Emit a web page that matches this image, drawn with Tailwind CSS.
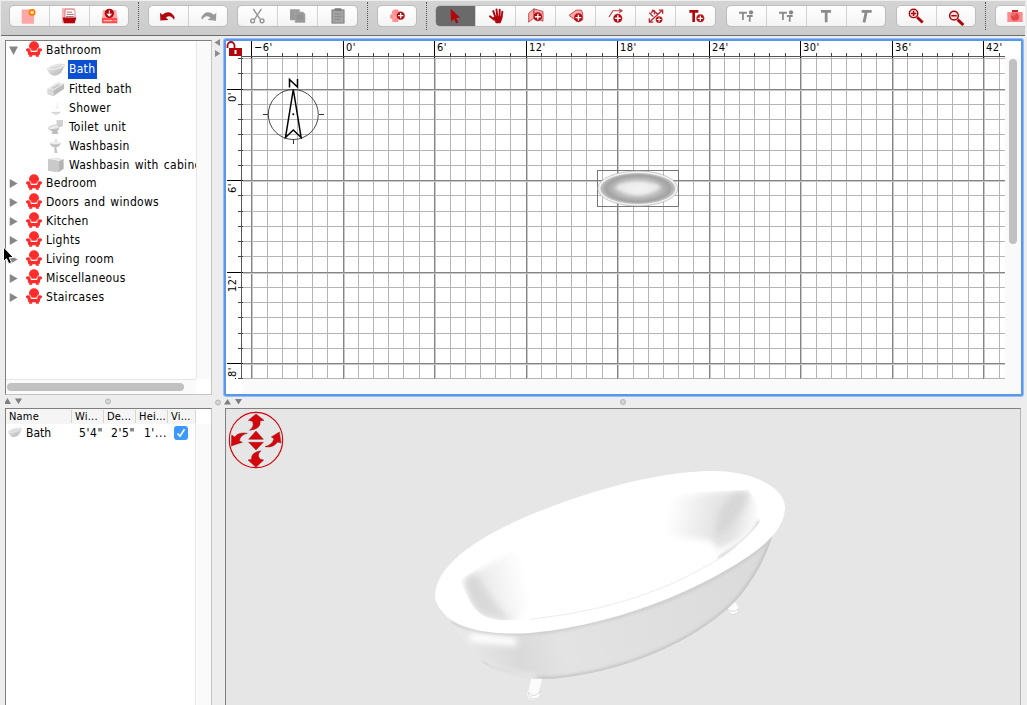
<!DOCTYPE html>
<html lang="en">
<head>
<meta charset="utf-8">
<title>Home planner</title>
<script src="https://cdn.jsdelivr.net/npm/@tailwindcss/browser@4"></script>
</head>
<body class="w-[1027px] h-[705px] overflow-hidden bg-[#ededed] font-['DejaVu_Sans_Condensed','DejaVu_Sans',sans-serif] text-black flex flex-col relative">

<svg width="0" height="0" class="absolute">
  <defs>
    <linearGradient id="tub" x1="0" y1="0" x2="1" y2="1"><stop offset="0" stop-color="#f0f0f0"/><stop offset="1" stop-color="#b2b2b2"/></linearGradient>
    <symbol id="chair" viewBox="78 14 48 48">
      <path fill="#ff2c2c" d="M87 30a15 15 0 0 1 30 0v6q-5 2-6 8H93q-1-6-6-8zM78 39a7 7 0 0 1 12 0l3 8h18l3-8a7 7 0 0 1 12 0q1 5-5 7l-2 10h-3l1 5h-9l-1-4H97l-1 4h-9l1-5h-3l-2-10q-6-2-5-7z"/>
      <path fill="none" stroke="#fff" stroke-width="2" d="M86 33q7 2 8 11h16q1-9 8-11"/>
    </symbol>
    <symbol id="bath" viewBox="0 0 54 42">
      <path d="M1 18q3 14 14 19 14 4 25-6 9-9 13-27z" fill="url(#tub)"/>
      <ellipse cx="27" cy="13" rx="26" ry="7.500" transform="rotate(-14 27 13)" fill="#f4f4f4" stroke="#c4c4c4" stroke-width="1.500"/>
      <ellipse cx="27" cy="13" rx="20" ry="4" transform="rotate(-14 27 13)" fill="#dadada"/>
      <path d="M17 37l-2 3M43 28l3 3" stroke="#ccc" stroke-width="2"/>
    </symbol>
    <g id="plus"><circle r="14" fill="#b4050b" stroke="#ffd7d7" stroke-width="1"/><path d="M-9 0H9M0-9V9" stroke="#fff" stroke-width="4.500"/></g>
  </defs>
</svg>

<!-- Toolbar -->
<header class="h-[36px] shrink-0 mx-px w-[1024px] border-t border-[#eee] border-b border-b-[#6d6d6d] bg-linear-to-b from-[#d4d4d4] to-[#cbcbcb] pt-1 pl-2 flex items-start overflow-hidden">
  <div class="w-[120px] h-[22px] flex shrink-0 rounded-[5px] overflow-hidden border border-[#bdbdbd] bg-linear-to-b from-white to-[#f4f4f4] divide-x divide-[#d2d2d2]">
    <svg class="w-10 h-full shrink-0" viewBox="29 18 120 60"><path d="M65 28h38v44H65z" fill="#ffa7a7"/><circle cx="97" cy="37" r="8" fill="#ffe28a" stroke="#ff7a05" stroke-width="5"/></svg>
    <svg class="w-10 h-full shrink-0" viewBox="149 18 120 60"><path d="M186 24h40v46h-40z" fill="#ffb0b0"/><path d="M196 27h24l6 7v26h-32z" fill="#fff" stroke="#b55" stroke-width="2"/><path d="M200 36h17M200 43h22M198 50h24" stroke="#a66" stroke-width="3"/><path d="M188 53h42l-5 17h-33z" fill="#b1060c"/></svg>
    <svg class="w-10 h-full shrink-0" viewBox="269 18 120 60"><path d="M308 30h40l3 23h-46z" fill="#ffabab"/><path d="M305 53h46v17h-46z" fill="#ff4d4d"/><path d="M310 62h26M340 62h3M346 62h3" stroke="#ffb5b5" stroke-width="4"/><circle cx="327" cy="40" r="14" fill="#b1060c"/><path d="M327 31v12M320 41l7 8 7-8" fill="#fff" stroke="#fff" stroke-width="3"/></svg>
  </div>
  <div class="h-7 w-px ml-[9px] mr-[9px] -mt-[3px] border-l border-dotted border-[#555] shrink-0"></div>
  <div class="w-[80px] h-[22px] flex shrink-0 rounded-[5px] overflow-hidden border border-[#bdbdbd] bg-linear-to-b from-white to-[#f4f4f4] divide-x divide-[#d2d2d2]">
    <svg class="w-10 h-full shrink-0" viewBox="446 18 120 60"><path fill="#b1060c" d="M480 38l7 6q24-18 38 8l-2 8q-10-18-25-7l8 7-25 2z"/></svg>
    <svg class="w-10 h-full shrink-0" viewBox="566 18 120 60"><path fill="#999" d="M648 38l-7 6q-24-18-38 8l2 8q10-18 25-7l-8 7 25 2z"/></svg>
  </div>
  <div class="w-[121px] h-[22px] ml-[9px] flex shrink-0 rounded-[5px] overflow-hidden border border-[#bdbdbd] bg-linear-to-b from-white to-[#f4f4f4] divide-x divide-[#d2d2d2]">
    <svg class="w-10 h-full shrink-0" viewBox="24 18 120 60"><g fill="none" stroke="#8f8f8f" stroke-width="4"><path d="M71 26l21 32M96 26L75 58"/><circle cx="69" cy="63" r="6"/><circle cx="98" cy="63" r="6"/></g></svg>
    <svg class="w-10 h-full shrink-0" viewBox="144 18 120 60"><rect x="181" y="27" width="30" height="34" rx="2" fill="#9b9b9b"/><path d="M197 36h24l6 6v26h-30z" fill="#999" stroke="#aaa" stroke-width="2"/><path d="M202 48h18M202 55h18" stroke="#868686" stroke-width="2"/></svg>
    <svg class="w-10 h-full shrink-0" viewBox="264 18 120 60"><rect x="304" y="28" width="40" height="43" rx="2" fill="#929292"/><path d="M314 25h20v7h-20z" fill="#7c7c7c"/><path d="M309 34h30v33h-30z" fill="#a5a5a5"/><path d="M313 42h20M313 50h22M313 58h18" stroke="#858585" stroke-width="2.500"/></svg>
  </div>
  <div class="h-7 w-px ml-[9px] mr-[9px] -mt-[3px] border-l border-dotted border-[#555] shrink-0"></div>
  <div class="w-[40px] h-[22px] flex shrink-0 rounded-[5px] overflow-hidden border border-[#bdbdbd] bg-linear-to-b from-white to-[#f4f4f4]">
    <svg class="w-10 h-full shrink-0" viewBox="444 18 120 60"><path fill="#ff9292" d="M486 42a11 11 0 0 1 22-5v20h-3v9h-18v-9q-9-2-7-10 2-6 6-5z"/><path d="M487 43q6 3 4 9h12" fill="none" stroke="#ffc4c4" stroke-width="2"/><use href="#plus" transform="translate(512 47) scale(.9)"/></svg>
  </div>
  <div class="h-7 w-px ml-[9px] mr-[8px] -mt-[3px] border-l border-dotted border-[#555] shrink-0"></div>
  <div class="w-[281px] h-[22px] flex shrink-0 rounded-[5px] overflow-hidden border border-[#bdbdbd] bg-linear-to-b from-white to-[#f4f4f4] divide-x divide-[#d2d2d2]">
    <svg class="w-10 h-full shrink-0 bg-[#6a6a6a]" viewBox="18 18 120 60"><path fill="#b1060c" d="M63 26l29 27-12 1 7 13-7 4-7-14-9 9z"/></svg>
    <svg class="w-10 h-full shrink-0" viewBox="137 18 120 60"><path fill="none" stroke="#b1060c" stroke-width="6" stroke-linecap="round" d="M180 49l12 10M190 33l8 22M200 28l3 26M210 29l-1 26M218 35l-3 20"/><path fill="#b1060c" d="M189 51l29-3q0 12-6 22h-14z"/></svg>
    <svg class="w-10 h-full shrink-0" viewBox="257 18 120 60"><path d="M296 40l16-14v28l-16 13zM312 26l28 8v30l-28-10z" fill="#ffabab" stroke="#c14c4c" stroke-width="3"/><use href="#plus" transform="translate(324 50)"/></svg>
    <svg class="w-10 h-full shrink-0" viewBox="377 18 120 60"><path d="M417 46l22-16h16l4 10v20l-18 4z" fill="#ffa6a6" stroke="#c14c4c" stroke-width="3"/><use href="#plus" transform="translate(446 53)"/></svg>
    <svg class="w-10 h-full shrink-0" viewBox="497 18 120 60"><path d="M537 51l12-19h26M568 26l9 6-9 6" fill="none" stroke="#c4383c" stroke-width="3.500"/><use href="#plus" transform="translate(564 55)"/></svg>
    <svg class="w-10 h-full shrink-0" viewBox="617 18 120 60"><path d="M658 67l40-37M658 55v12h12M687 30h12v11M666 30l20 13M664 39q8-14 11-5l-2 9M658 38l12 12" fill="none" stroke="#b9292e" stroke-width="4"/><use href="#plus" transform="translate(688 59) scale(.75)"/></svg>
    <svg class="w-10 h-full shrink-0" viewBox="737 18 120 60"><path d="M777 34h27M790 34v32" stroke="#b1060c" stroke-width="8"/><use href="#plus" transform="translate(810 55) scale(.85)"/></svg>
  </div>
  <div class="w-[160px] h-[22px] ml-[10px] flex shrink-0 rounded-[5px] overflow-hidden border border-[#bdbdbd] bg-linear-to-b from-white to-[#f4f4f4] divide-x divide-[#d2d2d2]">
    <svg class="w-10 h-full shrink-0" viewBox="19 18 120 60"><path d="M56 38h24M68 38v22M80 48h18M89 48v18" stroke="#8c8c8c" stroke-width="5.500"/><circle cx="93" cy="37" r="6.500" fill="#888"/></svg>
    <svg class="w-10 h-full shrink-0" viewBox="139 18 120 60"><path d="M176 38h24M188 38v22M200 48h18M209 48v18" stroke="#8c8c8c" stroke-width="5.500"/><circle cx="213" cy="37" r="6.500" fill="#888"/></svg>
    <svg class="w-10 h-full shrink-0" viewBox="259 18 120 60"><path d="M302 34h31M318 34v33" stroke="#8c8c8c" stroke-width="8.500"/></svg>
    <svg class="w-10 h-full shrink-0" viewBox="380 18 120 60"><path d="M424 34h30M438 34l-7 33" stroke="#8c8c8c" stroke-width="8.500"/></svg>
  </div>
  <div class="w-[80px] h-[22px] ml-[10px] flex shrink-0 rounded-[5px] overflow-hidden border border-[#bdbdbd] bg-linear-to-b from-white to-[#f4f4f4] divide-x divide-[#d2d2d2]">
    <svg class="w-10 h-full shrink-0" viewBox="529 18 120 60"><path d="M591 52l17 16" stroke="#a9060b" stroke-width="9"/><circle cx="580" cy="40" r="13" fill="#ffdede" stroke="#a9060b" stroke-width="4.500"/><path d="M572 40h16M580 32v16" stroke="#a9060b" stroke-width="4.500"/></svg>
    <svg class="w-10 h-full shrink-0" viewBox="649 18 120 60"><path d="M711 59l17 16" stroke="#a9060b" stroke-width="9"/><circle cx="700" cy="47" r="13" fill="#ffdede" stroke="#a9060b" stroke-width="4.500"/><path d="M692 47h16" stroke="#a9060b" stroke-width="4.500"/></svg>
  </div>
  <div class="h-7 w-px ml-[9px] mr-[9px] -mt-[3px] border-l border-dotted border-[#555] shrink-0"></div>
  <div class="w-[41px] h-[22px] flex shrink-0 rounded-[5px] overflow-hidden border border-[#bdbdbd] bg-linear-to-b from-white to-[#f4f4f4]">
    <svg class="w-10 h-full shrink-0" viewBox="828 18 120 60"><path d="M862 36h46v30h-46z" fill="#ff8a8a"/><path d="M876 30h18v6h-18z" fill="#b9292e"/><circle cx="885" cy="50" r="12" fill="#e5484c"/><path d="M877 48q3-7 10-6" stroke="#ff9a9a" stroke-width="3" fill="none"/></svg>
  </div>
</header>

<main class="flex flex-1 min-h-0">
  <!-- Catalog and furniture list -->
  <section class="w-[207px] ml-[5px] pt-1 flex flex-col shrink-0">
    <div class="h-[355px] shrink-0 bg-white border-t border-l border-[#7f7f7f] border-r border-r-[#c4c4c4] border-b border-b-[#c4c4c4] grid grid-cols-[190px_15px] grid-rows-[338px_15px]">
      <div id="tree" class="overflow-hidden text-[12px] tracking-[0.3px] [word-spacing:1.3px] whitespace-nowrap"></div>
      <div class="bg-[#fafafa] border-l border-[#e6e6e6]"></div>
      <div class="bg-[#fafafa] border-t border-[#e6e6e6] pt-[3px] pl-px"><div class="w-[177px] h-2 rounded-full bg-[#c1c1c1]"></div></div>
      <div class="bg-white"></div>
    </div>
    <div class="h-[13px] shrink-0 flex items-center">
      <svg width="207" height="13" viewBox="0 0 207 13"><path d="M-1 9h7L2.500 3zM10 3.500h7L13.500 9z" fill="#7f7f7f"/><circle cx="103" cy="6.500" r="2.500" fill="#d5d5d5" stroke="#b5b5b5"/></svg>
    </div>
    <div class="flex-1 bg-white border-t border-l border-[#7f7f7f] border-r border-r-[#c4c4c4] flex flex-col text-[12px] leading-none whitespace-nowrap">
      <div class="h-[15px] w-[190px] bg-[#f5f5f5] grid grid-cols-[66px_32px_32px_32px_28px] items-center text-[11px] tracking-[0.2px]">
        <span class="pl-[3px] border-r border-[#d5d5d5] h-[13px] leading-[13px]">Name</span>
        <span class="pl-[3px] border-r border-[#d5d5d5] h-[13px] leading-[13px]">Wi...</span>
        <span class="pl-[3px] border-r border-[#d5d5d5] h-[13px] leading-[13px]">De...</span>
        <span class="pl-[3px] border-r border-[#d5d5d5] h-[13px] leading-[13px]">Hei...</span>
        <span class="pl-[3px] border-r border-[#d5d5d5] h-[13px] leading-[13px]">Vi...</span>
      </div>
      <div class="flex flex-1">
        <div class="w-[190px] border-r border-[#e6e6e6]">
          <div class="h-[17px] grid grid-cols-[66px_31px_32px_32px_28px] items-center">
            <span class="flex items-center pl-[2px] gap-1"><svg width="14" height="11" viewBox="0 0 54 42"><use href="#bath"/></svg>Bath</span>
            <span class="text-right tracking-[0.6px]">5'4"</span><span class="text-right tracking-[0.6px]">2'5"</span><span class="text-right tracking-[0.6px]">1'...</span>
            <span class="flex pl-[7px]"><svg width="14" height="14" viewBox="0 0 14 14"><rect width="14" height="14" rx="3" fill="#3b99fc"/><path d="M3.500 7.500L6 10.300l4.500-7" fill="none" stroke="#fff" stroke-width="1.600"/></svg></span>
          </div>
        </div>
        <div class="flex-1 bg-[#fafafa]"></div>
      </div>
    </div>
  </section>

  <!-- Vertical splitter -->
  <div class="w-3 shrink-0"><svg width="12" height="380" viewBox="212 36 12 380"><path d="M220 39v7l-5.500-3.500zM215 50v7l5.500-3.500z" fill="#8c8c8c"/><circle cx="218" cy="402.500" r="2.500" fill="#d5d5d5" stroke="#b5b5b5"/></svg></div>

  <!-- Plan and 3D view -->
  <section class="w-[799px] pt-[3px] flex flex-col shrink-0">
    <div class="h-[357px] shrink-0 border-2 border-[#5a96ea] rounded-[2px] shadow-[0_0_0_1px_#93bff8] bg-white">
      <svg id="plan" width="795" height="353" viewBox="226 41 795 353" font-family="DejaVu Sans Condensed" font-size="11" letter-spacing=".5">
        <defs>
          <radialGradient id="top"><stop offset="0" stop-color="#f0f0f0"/><stop offset=".3" stop-color="#e2e2e2"/><stop offset=".68" stop-color="#b4b4b4"/><stop offset=".85" stop-color="#a2a2a2"/><stop offset="1" stop-color="#c4c4c4"/></radialGradient>
          <filter id="blur1" x="-20%" y="-30%" width="140%" height="160%"><feGaussianBlur stdDeviation="1.800"/></filter>
        </defs>
        <path d="M1005 58h16v336H243v-15h762z" fill="#fafafa"/>
        <g id="grid" shape-rendering="crispEdges"></g>
        <g id="labels"></g>
        <!-- Padlock -->
        <path d="M227.500 48v-2.500a3.500 3.500 0 0 1 7 0V49" fill="none" stroke="#b1060c" stroke-width="1.800"/><path d="M229 48h13v8h-13z" fill="#b1060c"/><path d="M235.500 50v4" stroke="#fff" stroke-width="2"/>
        <!-- Compass -->
        <g fill="none" stroke="#333" stroke-width="1"><circle cx="293.300" cy="114.500" r="25" stroke-width=".9"/><path d="M263 114.500h5M319 114.500h5M293.500 139v5"/></g>
        <path d="M293.300 89.500l-7.800 48 7.800-7.500 7.800 7.500zM289.500 87.500v-8l8 7.500v-8" fill="none" stroke="#000" stroke-width="1.500"/><circle cx="293.300" cy="114.300" r="1"/>
        <!-- Selected bath -->
        <rect x="597.500" y="170.500" width="81" height="36" fill="none" stroke="#777"/>
        <ellipse cx="637.800" cy="188.500" rx="40" ry="17.500" fill="#f2f2f2" stroke="#b4b4b4" stroke-width=".7"/>
        <ellipse cx="637.800" cy="188.500" rx="37.500" ry="15.500" fill="url(#top)"/>
        <path d="M619 184q18-4 38 0l4 4q-8 5-23 7-15-2-23-7z" fill="#f2f2f2" opacity=".75" filter="url(#blur1)"/>
        <rect x="1009" y="59" width="8" height="185" rx="4" fill="#c1c1c1"/>
      </svg>
    </div>
    <div class="h-3 shrink-0"><svg width="799" height="12" viewBox="224 396 799 12"><path d="M224 404.500h7l-3.500-5.500zM235 399h7l-3.500 5.500z" fill="#7f7f7f"/><circle cx="623" cy="402" r="2.500" fill="#d5d5d5" stroke="#b5b5b5"/></svg></div>
    <div class="ml-px w-[796px] flex-1 bg-[#e6e6e6] border-l border-t border-[#808080] border-r border-r-[#b5b5b5]">
      <svg width="794" height="296" viewBox="226 409 794 296">
        <defs>
          <linearGradient id="side" gradientUnits="userSpaceOnUse" x1="100" y1="600" x2="1050" y2="350"><stop offset="0" stop-color="#ececec"/><stop offset=".19" stop-color="#d9d9d9"/><stop offset=".32" stop-color="#e3e3e3"/><stop offset="1" stop-color="#dadada"/></linearGradient>
          <linearGradient id="inL" gradientUnits="userSpaceOnUse" x1="160" y1="430" x2="320" y2="390"><stop offset="0" stop-color="#e4e4e4"/><stop offset=".4" stop-color="#f0f0f0"/><stop offset="1" stop-color="#fff"/></linearGradient>
          <linearGradient id="inR" gradientUnits="userSpaceOnUse" x1="740" y1="190" x2="1010" y2="235"><stop offset="0" stop-color="#fff"/><stop offset=".5" stop-color="#e6e6e6"/><stop offset=".75" stop-color="#e2e2e2"/><stop offset="1" stop-color="#fdfdfd"/></linearGradient>
          <filter id="soft" filterUnits="userSpaceOnUse" x="0" y="0" width="1170" height="765"><feGaussianBlur stdDeviation="10"/></filter>
          <filter id="soft2" filterUnits="userSpaceOnUse" x="0" y="0" width="1170" height="765"><feGaussianBlur stdDeviation="4"/></filter>
          <clipPath id="hull"><path d="M90 512Q130 580 170 622Q240 692 400 686Q600 668 780 574Q900 508 960 438Q1030 350 1058 256L800 300z"/></clipPath>
          <clipPath id="bowl"><path d="M120 390L300 270L730 130L985 120Q1020 160 1020 215Q985 265 900 325Q700 430 500 482Q300 520 220 508Q170 495 150 455z"/></clipPath>
        </defs>
        <!-- Navigation wheel -->
        <g transform="translate(0 370) scale(.33333)">
          <ellipse cx="768" cy="210" rx="80" ry="83" fill="none" stroke="#d4060c" stroke-width="3.500"/>
          <g fill="#d4060c" stroke="#8f1a1d" stroke-width="1.500">
            <path d="M768 132l24 19-12 2q5 24-32 28 17-12 9-27l-12-3z"/>
            <path d="M768 292l-24-22 11-2q-4-20 28-26-14 12-3 25l11 3z"/>
            <path d="M694 228l1-33 9 6q12-16 38-11-20 4-24 22l9 5z"/>
            <path d="M838 186l5 33-10-3q-14 19-38 14 22-6 27-24l-8-5z"/>
            <path d="M768 183l22 25h-44zM768 240l22-23h-44z"/>
          </g>
        </g>
        <!-- Bathtub -->
        <g transform="translate(420 450) scale(.33333)">
          <path d="M334 684q-4 20-8 36l-5 10 4 14 14 6 16-4 8-14-6-8 10-40zM928 452l-8 20 2 14 14 8 18-4 4-12-9-18-10-8z" fill="#fbfbfb"/>
          <path d="M326 726q14 22 32 0l3 10-8 10h-16l-10-8zM922 478q16 14 34-2l-2 12-16 6-14-8z" fill="#fff" stroke="#c9c9c9" stroke-width="2"/>
          <g clip-path="url(#hull)">
            <path d="M60 230h1020v480H60z" fill="url(#side)"/>
            <path d="M180 640Q300 690 400 686Q600 668 780 574Q900 508 960 438Q1030 350 1058 256" fill="none" stroke="#c4c4c4" stroke-width="12" filter="url(#soft2)"/>
            <path d="M150 562l140 14" fill="none" stroke="#fff" stroke-width="26" filter="url(#soft)"/>
            <path d="M200 652Q260 680 350 684" fill="none" stroke="#f8f8f8" stroke-width="16" filter="url(#soft)"/>
            <path d="M90 512Q180 562 380 546Q700 498 930 358Q1020 304 1058 258" fill="none" stroke="#c8c8c8" stroke-width="7" filter="url(#soft2)"/>
          </g>
          <path d="M45 440C45 330 220 230 440 153C620 90 770 63 880 63C1010 63 1095 120 1095 170C1095 250 1010 310 880 382C700 478 500 534 330 549C180 558 100 526 70 488Q45 460 45 440z" fill="#fff"/>
          <g clip-path="url(#bowl)">
            <path d="M132 400Q135 375 180 360L300 290 380 340 290 520Q220 520 182 486Q145 455 132 400z" fill="url(#inL)" filter="url(#soft)"/>
            <path d="M138 380Q140 448 184 495L275 515Q215 450 170 376z" fill="#cfcfcf" opacity=".6" filter="url(#soft)"/>
            <path d="M730 160Q800 125 975 124L1002 150Q1012 180 1014 215Q985 260 890 300Q895 288 870 270L720 255z" fill="url(#inR)" filter="url(#soft)"/>
            <path d="M940 128L995 120 972 175 925 235 885 272 895 190z" fill="#cecece" opacity=".6" filter="url(#soft)"/>
            <path d="M1018 212Q1003 250 960 282L895 325" fill="none" stroke="#d4d4d4" stroke-width="9" filter="url(#soft2)"/>
          </g>
          <path d="M330 508Q560 484 740 408Q880 345 950 290" fill="none" stroke="#e2e2e2" stroke-width="2"/>
        </g>
      </svg>
    </div>
  </section>
</main>

<!-- Mouse pointer -->
<svg class="absolute left-0 top-[244px]" width="16" height="22" viewBox="0 0 16 22"><path d="M3.500 3v14.500l3-2.800 2.300 5 2.700-1.200-2.200-4.900h4.200z" fill="#000" stroke="#fff" stroke-width="1"/></svg>

<script>
const icons = {
  'Bath': '<use href="#bath"/>',
  'Fitted bath': '<path d="M2 20L32 1l19 4v16L20 42 2 37z" fill="#bcbcbc"/><path d="M2 20L32 1l19 4-31 20z" fill="#f0f0f0"/><path d="M10 19L33 6l9 2-22 13z" fill="#c8c8c8"/><path d="M2 20l18 5v17L2 37z" fill="#dadada"/>',
  'Shower': '<path d="M32 2v18" stroke="#e5e5e5" stroke-width="2"/><path d="M26 20h6M14 34q13 12 26 0z" fill="#ddd" stroke="#d0d0d0" stroke-width="2"/>',
  'Toilet unit': '<path d="M28 1l20-1v19l-18 5z" fill="#d0d0d0"/><ellipse cx="21" cy="22" rx="17" ry="6" transform="rotate(-12 21 22)" fill="#ececec" stroke="#bbb" stroke-width="2"/><path d="M8 27q3 6 9 8l-3 7h20l-3-9q6-5 6-10-10 7-29 4z" fill="#bdbdbd"/>',
  'Washbasin': '<path d="M8 12q20-7 34 0-4 11-14 13l3 17h-8l-1-17Q11 23 8 12z" fill="#c2c2c2"/><ellipse cx="25" cy="12" rx="16" ry="4" fill="#eee"/><path d="M27 1v7" stroke="#bbb" stroke-width="3"/>',
  'Washbasin with cabinet': '<path d="M3 4l20-4 27 4v28L36 42 3 38z" fill="#b4b4b4"/><path d="M3 4l20-4 27 4-14 6z" fill="#e9e9e9"/><path d="M3 4l33 6v32L3 38z" fill="#cacaca"/>'
};
const tree = document.getElementById('tree');
const cat = (name, open) => `<div class="h-[19px] flex items-center"><svg class="ml-[3px] shrink-0" width="9" height="9" viewBox="0 0 24 24"><path d="${open ? 'M0 1h24L12 24z' : 'M2 0v24l21-12z'}" fill="#878787"/></svg><svg class="ml-[8px] -mt-[3px] shrink-0" width="16" height="16"><use href="#chair" width="16" height="16"/></svg><span class="ml-[4px] -mt-[2px]">${name}</span></div>`;
const leaf = (name, on) => `<div class="h-[19px] flex items-center"><svg class="ml-[41px] shrink-0" width="18" height="14" viewBox="0 0 54 42">${icons[name]}</svg><span class="${on ? 'ml-[3px] pl-px pr-[2px] h-[19px] leading-[19px] bg-[#0a50d0] text-white' : 'ml-[4px]'}">${name}</span></div>`;
tree.innerHTML = cat('Bathroom', true) + Object.keys(icons).map(n => leaf(n, n === 'Bath')).join('') +
  ['Bedroom', 'Doors and windows', 'Kitchen', 'Lights', 'Living room', 'Miscellaneous', 'Staircases'].map(n => cat(n)).join('');

const xs = [251, 343, 434, 526, 617, 709, 800, 892, 983], ys = [89, 180, 272, 363];
const r = (x, y, w, h, c) => `<rect x="${x}" y="${y}" width="${w}" height="${h}" fill="${c}"/>`;
let minor = '', major = '';
const vMin = x => { if (x > 242 && x < 1005) minor += r(x, 57, 1, 322, '#b4b4b4') + r(x, 53, 1, 4, '#444'); };
const hMin = y => { if (y > 57 && y < 379) minor += r(243, y, 762, 1, '#b4b4b4') + r(238, y, 5, 1, '#444'); };
xs.forEach((x, i) => {
  (i % 2 ? [15, 30, 45, 60, 76] : [16, 31, 46, 61, 76]).forEach(d => vMin(x + d));
  major += r(x, 57, 1, 322, '#858585') + r(x + 1, 57, 1, 322, '#c8c8c8') + r(x, 41, 1, 17, '#000');
});
hMin(58); hMin(73);
ys.forEach((y, i) => {
  (i % 2 ? [15, 31, 46, 61, 76] : [15, 30, 45, 61, 76]).forEach(d => hMin(y + d));
  major += r(243, y, 762, 1, '#858585') + r(243, y + 1, 762, 1, '#c8c8c8') + r(227, y, 16, 1, '#000');
});
document.getElementById('grid').innerHTML = minor + major + r(241, 56, 764, 1, '#555') + r(241, 56, 1, 323, '#555');
document.getElementById('labels').innerHTML =
  xs.map((x, i) => `<text x="${x + 3}" y="51">${i ? (i - 1) * 6 : '−6'}'</text>`).join('') +
  ["0'", "6'", "12'", "8'"].map((t, i) => `<text transform="translate(236 ${[102, 193, 292, 377][i]}) rotate(-90)">${t}</text>`).join('') + r(235, 378, 1, 1, '#000');
</script>
</body>
</html>
